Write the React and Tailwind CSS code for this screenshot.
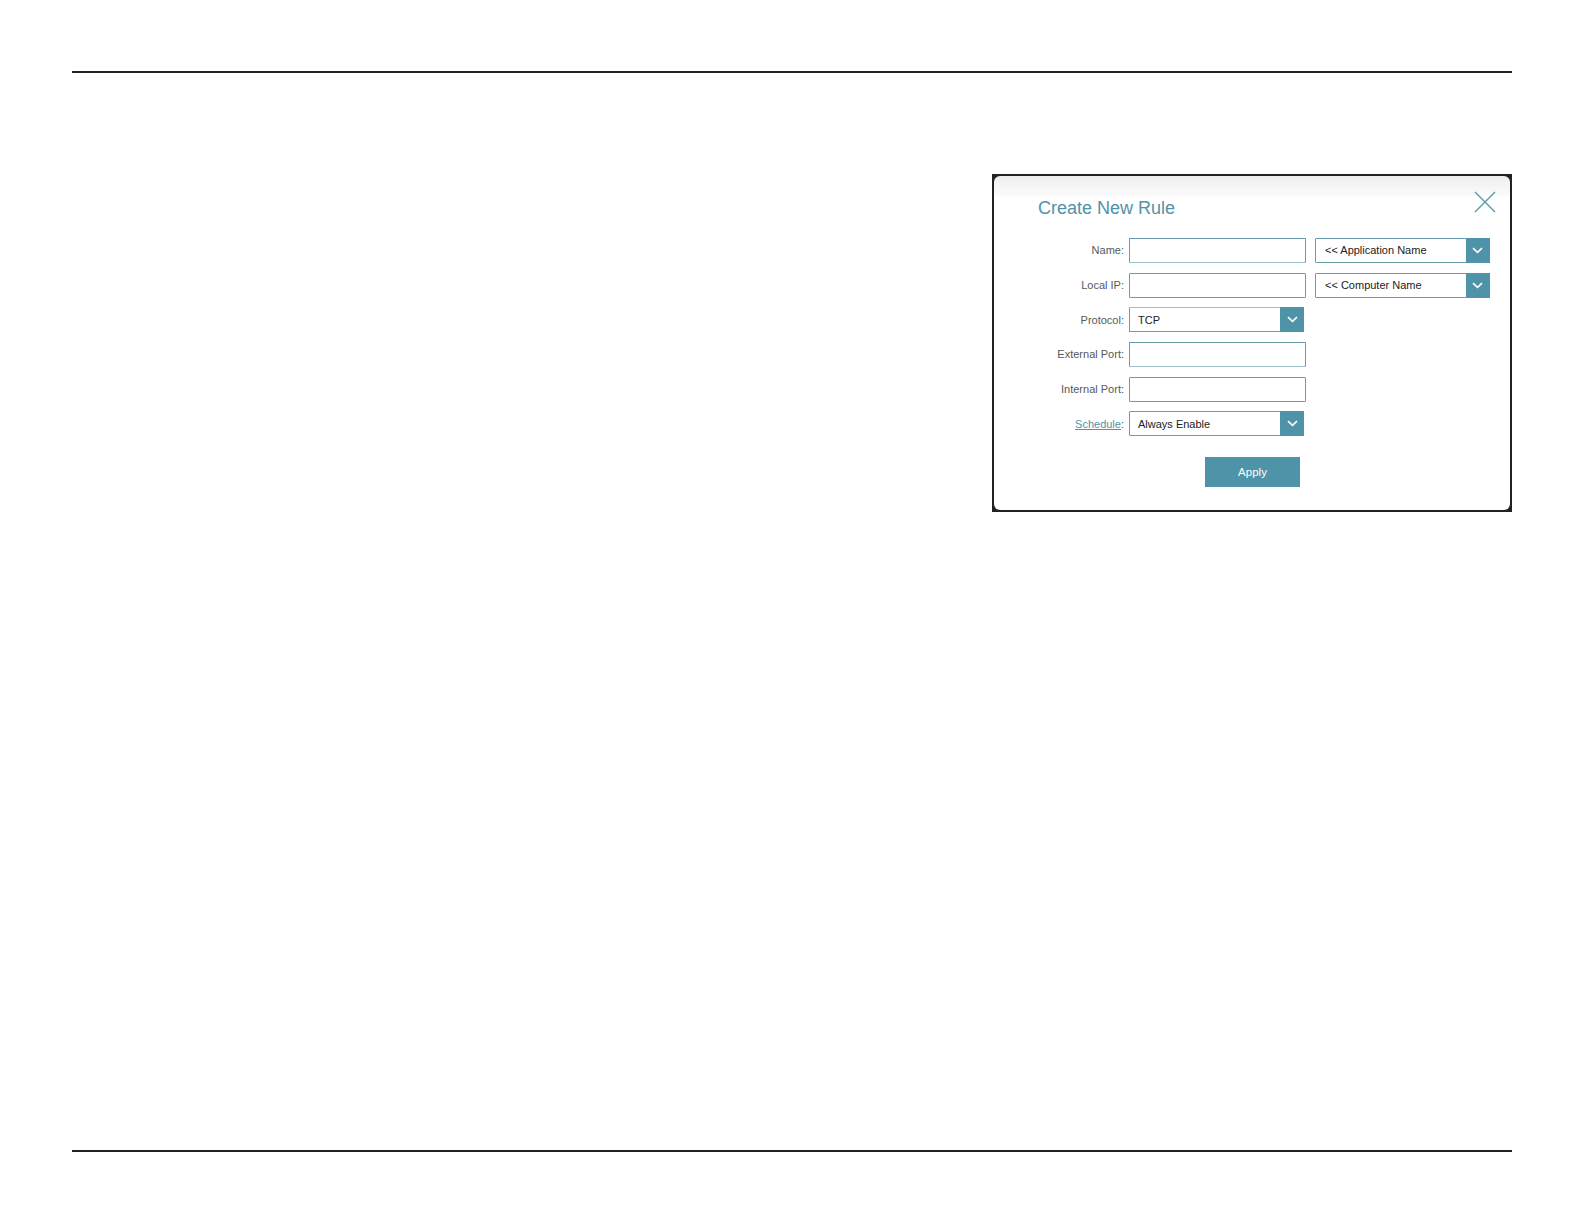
const FONT = "font-['Liberation_Sans',Arial,sans-serif]";

function Chevron() {
  return (
    <svg width="11" height="7" viewBox="0 0 11 7" fill="none" aria-hidden="true">
      <path d="M1 1.2 L5.5 5.4 L10 1.2" stroke="#ffffff" strokeWidth="1.6" />
    </svg>
  );
}

function TextBox({ className = "" }) {
  return (
    <input
      type="text"
      className={`block w-[176.5px] h-full bg-white border border-[#6a9cb0] rounded-[1px] outline-none ${className}`}
    />
  );
}

function SelectBox({ value, className = "" }) {
  return (
    <div className={`flex h-full items-stretch bg-white border border-[#6a9cb0] rounded-[1px] ${className}`}>
      <span className="flex-1 flex items-center pl-[8px] text-[11px] text-[#222222]">{value}</span>
      <span className="w-[24px] -my-px -mr-px flex items-center justify-center bg-[#4f93a8]">
        <Chevron />
      </span>
    </div>
  );
}

function Row({ label, link, children, side }) {
  return (
    <div className="flex h-[25px] items-center">
      <div className="w-[134px] pr-[4px] text-right text-[11px] text-[#55595c]">
        {link ? (
          <>
            <a href="#" className="text-[#4f93a8] underline">{label}</a>:
          </>
        ) : (
          `${label}:`
        )}
      </div>
      <div className="ml-[1px] h-full w-[176.5px]">{children}</div>
      {side && <div className="ml-[9.5px] h-full w-[174.5px]">{side}</div>}
    </div>
  );
}

export default function App() {
  return (
    <div className={`${FONT} flex h-[1224px] flex-col bg-white px-[72px] pt-[71px] pb-[72px]`}>
      <div className="h-[2px] w-full bg-[#222222]" />

      <div className="mt-[101px] ml-auto w-[520px] bg-[#222222] p-[2px]">
        <div className="h-[334px] rounded-[6px] bg-white bg-[linear-gradient(#eeeeee,#fbfbfb_20px,#ffffff_21px)] pt-[15px]">
          <div className="flex items-start justify-between pl-[44px] pr-[14px]">
            <h2 className="mt-[5px] text-[18px] leading-[24px] font-normal text-[#4f93a8]">Create New Rule</h2>
            <svg width="22" height="22" viewBox="0 0 22 22" fill="none" aria-label="Close">
              <path d="M1 1 L21 21 M21 1 L1 21" stroke="#5a9aa8" strokeWidth="1.4" />
            </svg>
          </div>

          <div className="mt-[18px] flex flex-col gap-[9.7px]">
            <Row label="Name" side={<SelectBox value="<< Application Name" className="[&>span:first-child]:pl-[9px]" />}>
              <TextBox className="border-b-[#9dbfc8]" />
            </Row>
            <Row label="Local IP" side={<SelectBox value="<< Computer Name" className="[&>span:first-child]:pl-[9px]" />}>
              <TextBox />
            </Row>
            <Row label="Protocol">
              <div className="h-full w-[175px]">
                <SelectBox value="TCP" className="border-t-[#9dbfc8]" />
              </div>
            </Row>
            <Row label="External Port">
              <TextBox className="border-b-[#9dbfc8]" />
            </Row>
            <Row label="Internal Port">
              <TextBox />
            </Row>
            <Row label="Schedule" link>
              <div className="h-full w-[175px]">
                <SelectBox value="Always Enable" />
              </div>
            </Row>
          </div>

          <div className="mt-[21px] ml-[211px]">
            <button className="h-[30px] w-[95px] bg-[#4f93a8] text-[11.5px] text-white">Apply</button>
          </div>
        </div>
      </div>

      <div className="mt-auto h-[2px] w-full bg-[#222222]" />
    </div>
  );
}
